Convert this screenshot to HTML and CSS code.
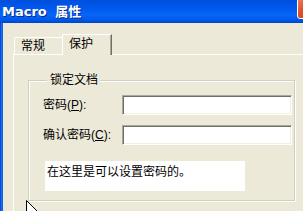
FILE: index.html
```html
<!DOCTYPE html>
<html>
<head>
<meta charset="utf-8">
<link rel="stylesheet" href="styles.css">
</head>
<body>
<div class="window">
  <div class="titlebar">
    <span class="title">Macro 属性</span>
    <span class="close"></span>
  </div>
  <div class="frame">
    <div class="edge"></div>
    <div class="client">
      <div class="tabs">
        <div class="tab">常规</div>
        <div class="tab tab-active">保护</div>
      </div>
      <div class="panel">
        <fieldset class="group">
          <legend class="legend">锁定文档</legend>
          <div class="form">
            <label class="label">密码(<u>P</u>):</label>
            <div class="input"></div>
            <label class="label">确认密码(<u>C</u>):</label>
            <div class="input"></div>
          </div>
          <div class="note">在这里是可以设置密码的。</div>
        </fieldset>
      </div>
    </div>
  </div>
  <svg class="cursor" width="13" height="21" viewBox="0 0 13 21">
    <path d="M0.5 0.5 L0.5 16.5 L4.5 12.5 L7.5 19.5 L9.5 18.5 L6.5 11.5 L11.5 11.5 Z" fill="#fff" stroke="#000" stroke-width="1"/>
  </svg>
</div>
</body>
</html>
```
FILE: styles.css
```css
html, body {
  margin: 0;
  padding: 0;
  overflow: hidden;
  background: #ECE9D8;
}
.window {
  position: relative;
  width: 323px;
  height: 211px;
  overflow: hidden;
  background: #ECE9D8;
  font-family: "Liberation Sans", "Noto Sans CJK SC", sans-serif;
  font-size: 12px;
  color: #000;
}
.titlebar {
  display: flex;
  align-items: center;
  height: 23px;
  padding-left: 2px;
  box-sizing: border-box;
  background: linear-gradient(to bottom, #0050DC 0%, #0058EE 35%, #0866F8 65%, #005AEC 85%, #0044CC 100%);
}
.title {
  color: #fff;
  font-family: "DejaVu Sans", "Noto Sans CJK SC", sans-serif;
  font-weight: bold;
  font-size: 13px;
  line-height: 16px;
  word-spacing: 4px;
  text-shadow: 1px 1px 0 #0A2A8C;
}
.close {
  align-self: flex-start;
  flex-shrink: 0;
  margin: -2px 5px 0 auto;
  width: 19px;
  height: 19px;
  border: 1px solid #fff;
  border-radius: 3px;
  background: linear-gradient(135deg, #EE7D5A 0%, #E0502A 40%, #C8401C 100%);
}
.frame {
  display: flex;
  height: 188px;
}
.edge {
  flex: 0 0 3px;
  background: linear-gradient(to right, #0838C8, #1C6CF0, #0A58E4);
}
.client {
  flex: 1;
  min-width: 0;
  padding: 11px 0 0 10px;
}
.tabs {
  display: flex;
  align-items: flex-end;
  height: 20px;
  padding-left: 1px;
}
.tab {
  display: flex;
  align-items: center;
  flex-shrink: 0;
  box-sizing: border-box;
  width: 48px;
  height: 17px;
  padding: 0 0 0 6px;
  border-top: 1px solid #fff;
  border-left: 1px solid #fff;
  border-top-left-radius: 2px;
  line-height: 14px;
}
.tab-active {
  position: relative;
  z-index: 1;
  width: 50px;
  height: 21px;
  margin-bottom: -1px;
  padding-bottom: 2px;
  background: #ECE9D8;
  border-right: 1px solid #716F64;
  box-shadow: inset -1px 0 0 #ACA899;
}
.panel {
  box-sizing: border-box;
  width: 320px;
  height: 170px;
  border-top: 1px solid #fff;
  border-left: 1px solid #fff;
  padding: 18px 0 0 14px;
}
.group {
  box-sizing: border-box;
  width: 267px;
  margin: 0;
  padding: 8px 0 9px 14px;
  border: 1px solid #D0D0BF;
  box-shadow: inset 1px 1px 0 #fff, 1px 1px 0 #fff;
}
.legend {
  margin-left: 4px;
  padding: 0 2px 0 3px;
  line-height: 14px;
  background: #ECE9D8;
}
.form {
  display: grid;
  grid-template-columns: 79px 170px;
  row-gap: 10px;
  align-items: center;
}
.label {
  line-height: 14px;
}
.input {
  box-sizing: border-box;
  height: 20px;
  background: #fff;
  border: 1px solid;
  border-color: #ACA899 #fff #fff #ACA899;
  box-shadow: inset 1px 1px 0 #716F64, inset -1px -1px 0 #F1EFE2;
}
.note {
  box-sizing: border-box;
  width: 200px;
  height: 30px;
  margin: 16px 0 0 2px;
  padding: 3px 2px 0 2px;
  line-height: 16px;
  background: #fff;
}
.cursor {
  position: absolute;
  left: 26px;
  top: 200px;
}
```
